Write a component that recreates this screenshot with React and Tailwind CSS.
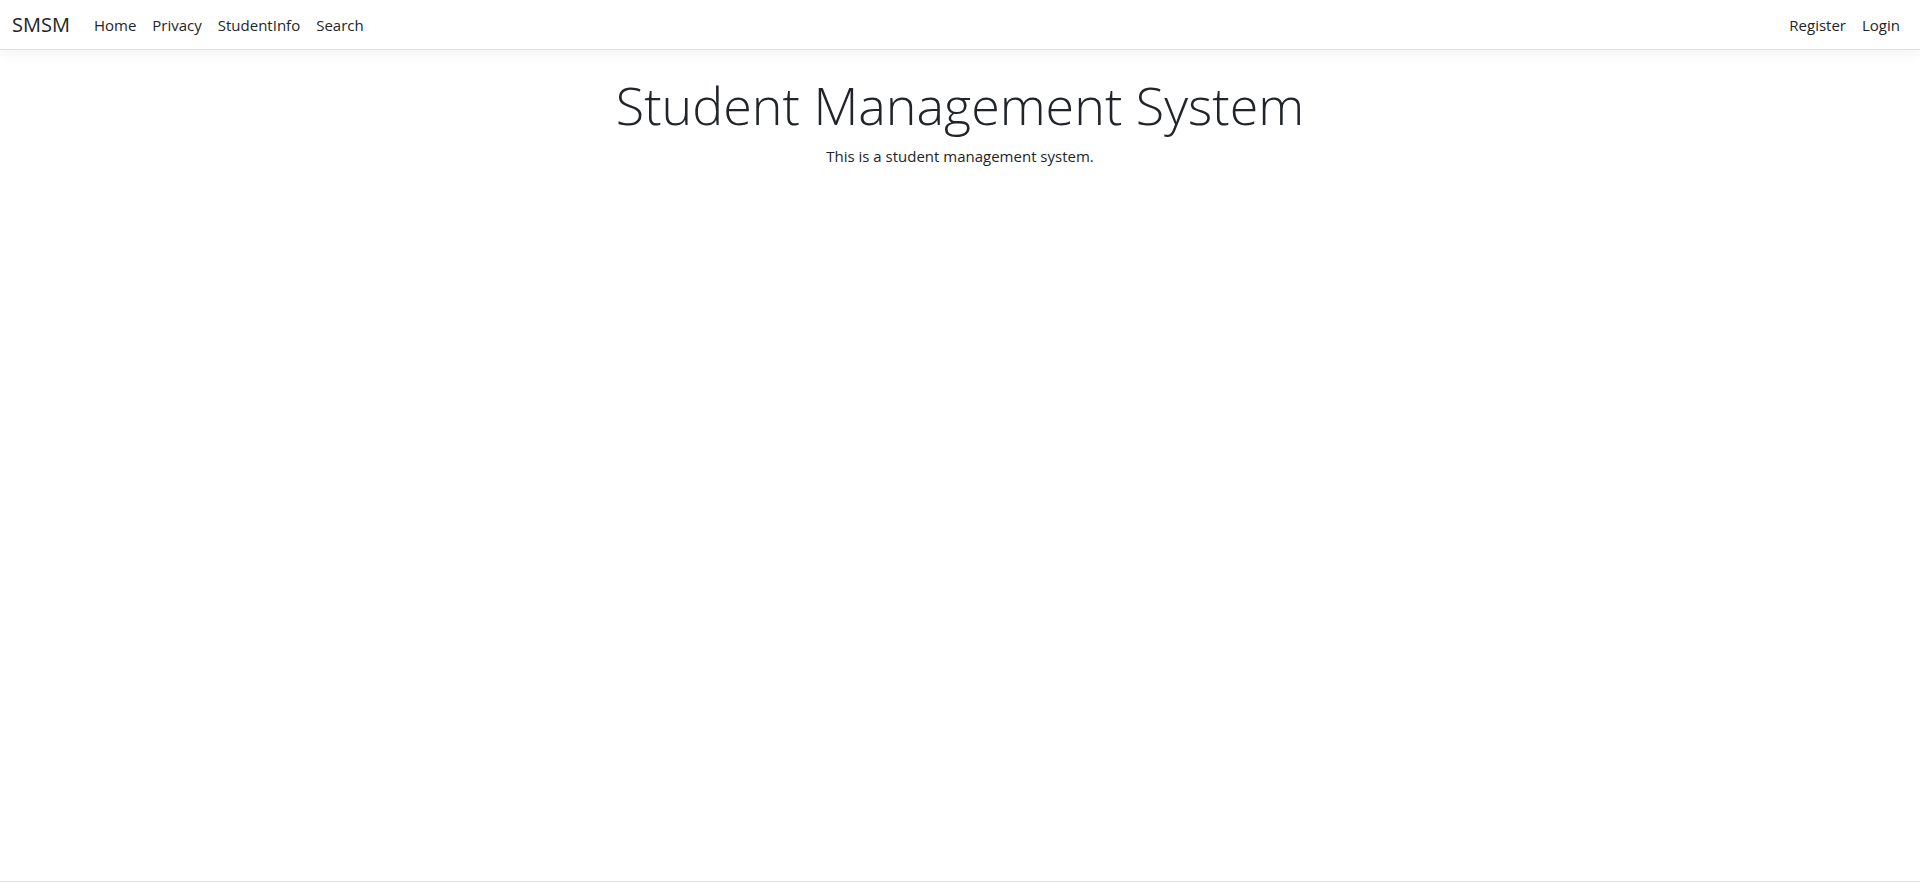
const links = ["Home", "Privacy", "StudentInfo", "Search"];

const App = () => {
    return (
        <div className="h-screen flex flex-col overflow-hidden bg-white text-[#212529] font-['Segoe_UI','Open_Sans',sans-serif]">
            <header className="mb-4">
                <nav className="h-[50px] flex items-center justify-between px-3 bg-white border-b border-[#dee2e6] shadow-[0_4px_12px_rgba(0,0,0,0.05)]">
                    <div className="flex items-center">
                        <a className="text-[20px] mr-4 text-[#212529]">SMSM</a>
                        <ul className="flex">
                            {links.map(link => (
                                <li key={link}><a className="px-2 text-[15px] text-[#212529]">{link}</a></li>
                            ))}
                        </ul>
                    </div>
                    <ul className="flex">
                        <li><a className="px-2 text-[15px] text-[#212529]">Register</a></li>
                        <li><a className="px-2 text-[15px] text-[#212529]">Login</a></li>
                    </ul>
                </nav>
            </header>
            <main className="flex-1 text-center">
                <h1 className="mt-2 text-[52px] leading-[1.2] font-light mb-2">Student Management System</h1>
                <p className="text-[15px] leading-6">This is a student management system.</p>
            </main>
            <footer className="h-[6px] shrink-0 border-t border-[#dee2e6]"></footer>
        </div>
    );
};
export default App;
